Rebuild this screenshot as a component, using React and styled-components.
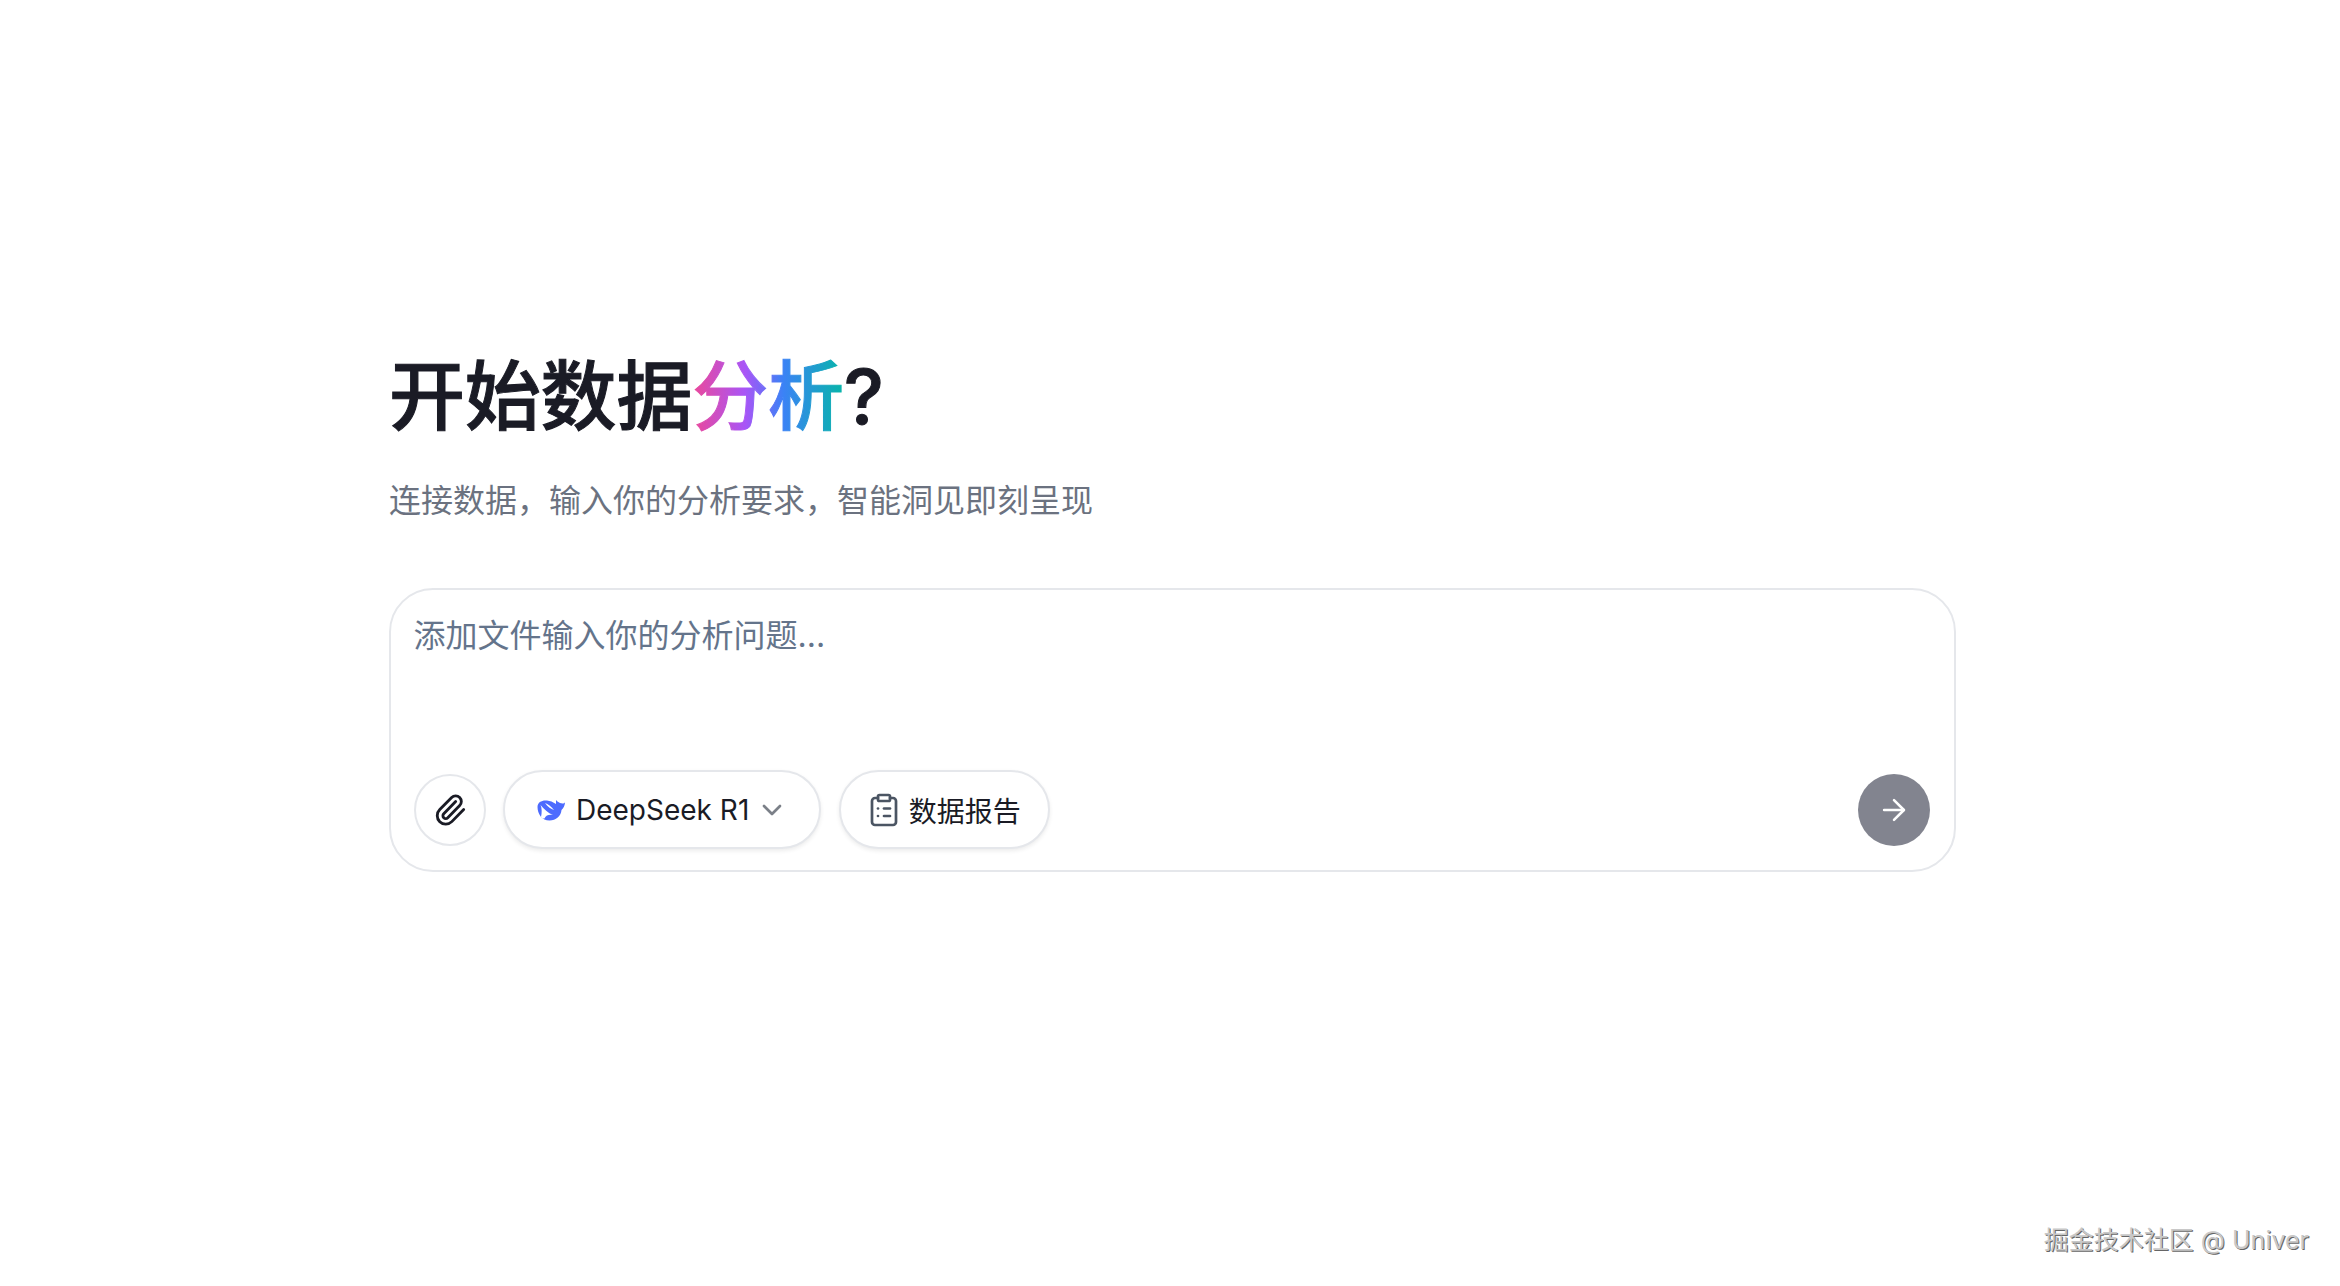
import React from "react";
import styled, { createGlobalStyle } from "styled-components";
import { ArrowRight, ChevronDown, ClipboardList, Paperclip } from "lucide-react";

const GlobalStyle = createGlobalStyle`
  html, body {
    margin: 0;
    padding: 0;
    background: #fff;
    font-family: Inter, "Noto Sans CJK SC", sans-serif;
  }
`;

const Page = styled.div`
  min-height: 1286px;
  box-sizing: border-box;
  padding: 350px 384px 0 389px;
`;

const Title = styled.h1`
  margin: 0;
  font-size: 76px;
  line-height: 92px;
  font-weight: 500;
  letter-spacing: -0.2px;
  color: #1a1b25;
  -webkit-text-stroke: 1px #1a1b25;
`;

const Gradient = styled.span`
  background: linear-gradient(90deg, #ec4899, #a855f7 35%, #3b82f6 60%, #06b6a8);
  -webkit-background-clip: text;
  background-clip: text;
  color: transparent;
  -webkit-text-stroke: 1px transparent;
`;

const Subtitle = styled.p`
  margin: 35px 0 0;
  font-size: 32px;
  line-height: 48px;
  color: #6b7280;
`;

const Card = styled.div`
  margin-top: 63px;
  height: 284px;
  box-sizing: border-box;
  border: 2px solid #e5e7eb;
  border-radius: 44px;
  padding: 22px 24px 21px 22.500px;
  display: flex;
  flex-direction: column;
  justify-content: space-between;
`;

const Placeholder = styled.div`
  font-size: 32px;
  line-height: 47px;
  color: #64748b;
`;

const Toolbar = styled.div`
  display: flex;
  align-items: center;
  gap: 17.500px;
`;

const IconButton = styled.button`
  width: 72px;
  height: 72px;
  padding: 0;
  box-sizing: border-box;
  border: 2px solid #e5e7eb;
  border-radius: 50%;
  background: #fff;
  display: flex;
  align-items: center;
  justify-content: center;
  color: #1a1b25;
`;

const Pill = styled.button`
  height: 79px;
  box-sizing: border-box;
  padding: 0 ${(p) => p.$right}px 0 ${(p) => p.$left}px;
  border: 2px solid #e5e7eb;
  border-radius: 40px;
  background: #fff;
  box-shadow: 0 2px 4px rgba(0, 0, 0, 0.08);
  display: flex;
  align-items: center;
  font: inherit;
  font-size: 28px;
  color: #1a1b25;
`;

const PillLabel = styled.span`
  margin: 0 ${(p) => p.$right || 0}px 0 ${(p) => p.$left}px;
`;

const SendButton = styled.button`
  margin-left: auto;
  width: 72px;
  height: 72px;
  padding: 0;
  border: 0;
  border-radius: 50%;
  background: #82848f;
  color: #fff;
  display: flex;
  align-items: center;
  justify-content: center;
`;

const Watermark = styled.div`
  position: absolute;
  right: 31px;
  bottom: 29px;
  font-size: 25px;
  line-height: 34px;
  color: #c8c8c8;
  text-shadow: 1px 1px 0 #666;
`;

const Whale = () => (
  <svg width="30" height="24" viewBox="0 0 30 24">
    <path
      fill="#4d6bfe"
      d="M1.500 9C1.500 4 6 2 11 2.500 14 2.800 17 4 20 6L20 2l1.500 1.500C23 4.500 25 5.500 26.500 5.500c1 0 2-.5 2.500-1-.2 3-1.500 6-3.500 7.500-.5 6-5.500 10.500-12 10.500C6 22.500 1.500 16 1.500 9z"
    />
    <path
      fill="#fff"
      d="M5 19C6 15 6 10 4.500 7 8 11 12 15 17 17c-4-.5-7 0-8.500 3.500C7 20.500 6 20 5 19z"
    />
    <path fill="#fff" d="M9 5c3 1 6 3.500 9 7-3-1-6-3-9-7z" />
  </svg>
);

const App = () => (
  <Page>
    <GlobalStyle />
    <Title>
      开始数据<Gradient>分析</Gradient>?
    </Title>
    <Subtitle>连接数据，输入你的分析要求，智能洞见即刻呈现</Subtitle>
    <Card>
      <Placeholder>添加文件输入你的分析问题...</Placeholder>
      <Toolbar>
        <IconButton>
          <Paperclip size={34} strokeWidth={2} />
        </IconButton>
        <Pill $left={31} $right={31}>
          <Whale />
          <PillLabel $left={10} $right={7}>DeepSeek R1</PillLabel>
          <ChevronDown size={32} color="#7b8088" strokeWidth={2} />
        </Pill>
        <Pill $left={25} $right={27}>
          <ClipboardList size={36} color="#4b5563" strokeWidth={1.8} />
          <PillLabel $left={7}>数据报告</PillLabel>
        </Pill>
        <SendButton>
          <ArrowRight size={34} strokeWidth={1.8} />
        </SendButton>
      </Toolbar>
    </Card>
    <Watermark>掘金技术社区 @ Univer</Watermark>
  </Page>
);

export default App;
